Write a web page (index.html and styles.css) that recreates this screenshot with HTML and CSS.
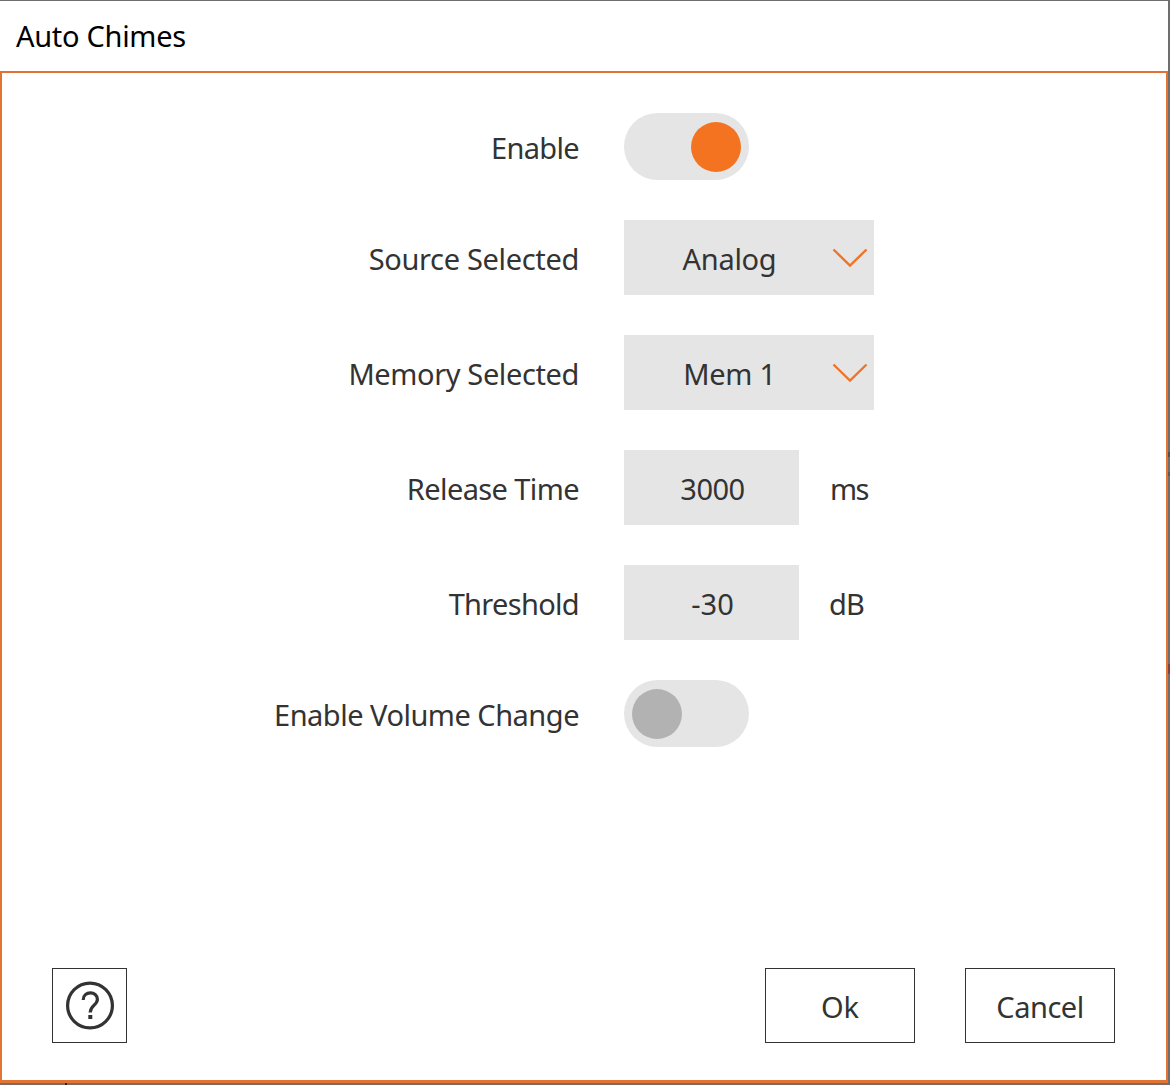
FILE: index.html
```html
<!DOCTYPE html>
<html lang="en">
<head>
  <meta charset="UTF-8" />
  <meta name="viewport" content="width=device-width, initial-scale=1.0" />
  <title>Auto Chimes</title>
  <link rel="stylesheet" href="styles.css">
</head>
<body>
  <div class="dialog">
    <header class="title"><span>Auto Chimes</span></header>
    <main class="content">
      <div class="form">
        <div class="row short">
          <span class="label enable">Enable</span>
          <div class="toggle on"><div class="knob"></div></div>
        </div>
        <div class="row">
          <span class="label source">Source Selected</span>
          <div class="select">
            <span class="value">Analog</span>
            <svg class="arrow" width="36" height="20" viewBox="0 0 36 20"><path d="M1.5 1.5L18 17.5L34.5 1.5" /></svg>
          </div>
        </div>
        <div class="row">
          <span class="label memory">Memory Selected</span>
          <div class="select">
            <span class="value mem">Mem 1</span>
            <svg class="arrow" width="36" height="20" viewBox="0 0 36 20"><path d="M1.5 1.5L18 17.5L34.5 1.5" /></svg>
          </div>
        </div>
        <div class="row">
          <span class="label release">Release Time</span>
          <div class="field"><span class="digits">3000</span></div>
          <span class="unit ms">ms</span>
        </div>
        <div class="row">
          <span class="label threshold">Threshold</span>
          <div class="field"><span>-30</span></div>
          <span class="unit">dB</span>
        </div>
        <div class="row short">
          <span class="label volume">Enable Volume Change</span>
          <div class="toggle"><div class="knob"></div></div>
        </div>
      </div>
      <footer class="footer">
        <div class="btn help">
          <svg width="50" height="50" viewBox="0 0 50 50">
            <circle cx="25" cy="24.5" r="22.4" />
            <path d="M18.2 19C18.2 9.8 32.4 9.6 32.4 18.5C32.4 24 25.2 24.5 25.2 31.5" />
            <rect x="23.3" y="34" width="4" height="4" />
          </svg>
        </div>
        <div class="btn ok"><span>Ok</span></div>
        <div class="btn cancel"><span>Cancel</span></div>
      </footer>
    </main>
  </div>
</body>
</html>
```
FILE: styles.css
```css
* {
  box-sizing: border-box;
}
body {
  margin: 0;
  height: 1085px;
  padding: 1px 2px 2px 0;
  /* bits of the window behind, along the right and bottom edges */
  background:
    linear-gradient(#505050, #505050) 1168px 452px / 2px 5px no-repeat,
    linear-gradient(#5a5a5a, #5a5a5a) 1168px 472px / 2px 4px no-repeat,
    linear-gradient(#7a4443, #7a4443) 1168px 664px / 2px 10px no-repeat,
    linear-gradient(#2e2018, #2e2018) 65px 1083px / 2px 2px no-repeat,
    linear-gradient(#7d6a60, #7d6a60) 0 1083px / 1168px 2px no-repeat,
    #6e6e6e;
  font-family: "Noto Sans", "Open Sans", sans-serif;
  font-size: 29px;
  line-height: 40px;
  color: #333;
  overflow: hidden;
}
.dialog {
  height: 100%;
  display: flex;
  flex-direction: column;
  background: #fff;
}
.title {
  height: 70px;
  padding: 15px 0 0 16px;
  color: #000;
  letter-spacing: -0.3px;
}
.content {
  flex: 1;
  display: flex;
  flex-direction: column;
  justify-content: space-between;
  border: 2px solid #e27433;
  border-bottom-width: 3px;
  padding: 40px 51px 37px 50px;
}
.form {
  display: flex;
  flex-direction: column;
  gap: 40px;
}
.row {
  height: 75px;
  display: flex;
  align-items: center;
}
.row.short {
  height: 67px;
}
.label {
  width: 527px;
  margin-right: 45px;
  padding-top: 2px;
  text-align: right;
  white-space: nowrap;
}
.enable,
.threshold {
  letter-spacing: -0.68px;
}
.source {
  letter-spacing: -0.33px;
}
.memory {
  letter-spacing: -0.38px;
}
.release {
  letter-spacing: -0.6px;
}
.volume {
  letter-spacing: -0.5px;
}
.toggle {
  width: 125px;
  height: 67px;
  padding: 0 8px;
  border-radius: 34px;
  background: #e5e5e5;
  display: flex;
  align-items: center;
}
.knob {
  width: 50px;
  height: 50px;
  border-radius: 50%;
  background: #b2b2b2;
}
.toggle.on {
  justify-content: flex-end;
}
.on .knob {
  background: #f47321;
}
.select {
  width: 250px;
  height: 75px;
  padding-right: 6px;
  background: #e5e5e5;
  display: flex;
  align-items: center;
}
.value {
  flex: 1;
  padding: 2px 0 0 3px;
  text-align: center;
  letter-spacing: -0.3px;
}
.arrow {
  fill: none;
  stroke: #f07428;
  stroke-width: 2.4;
}
.field {
  width: 175px;
  height: 75px;
  padding: 2px 0 0 2px;
  background: #e5e5e5;
  display: flex;
  align-items: center;
  justify-content: center;
}
.digits {
  letter-spacing: -0.5px;
}
.unit {
  padding: 2px 0 0 30px;
  letter-spacing: -0.8px;
}
.unit.ms {
  padding-left: 31px;
  letter-spacing: -1.5px;
}
.footer {
  display: flex;
  gap: 50px;
}
.btn {
  width: 150px;
  height: 75px;
  padding-top: 2px;
  border: 1px solid #333;
  display: flex;
  align-items: center;
  justify-content: center;
}
.cancel {
  letter-spacing: -0.5px;
}
.help {
  width: 75px;
  padding: 0;
  margin-right: auto;
}
.help circle,
.help path {
  fill: none;
  stroke: #333;
  stroke-width: 3.2;
}
.help rect {
  fill: #333;
}
```
